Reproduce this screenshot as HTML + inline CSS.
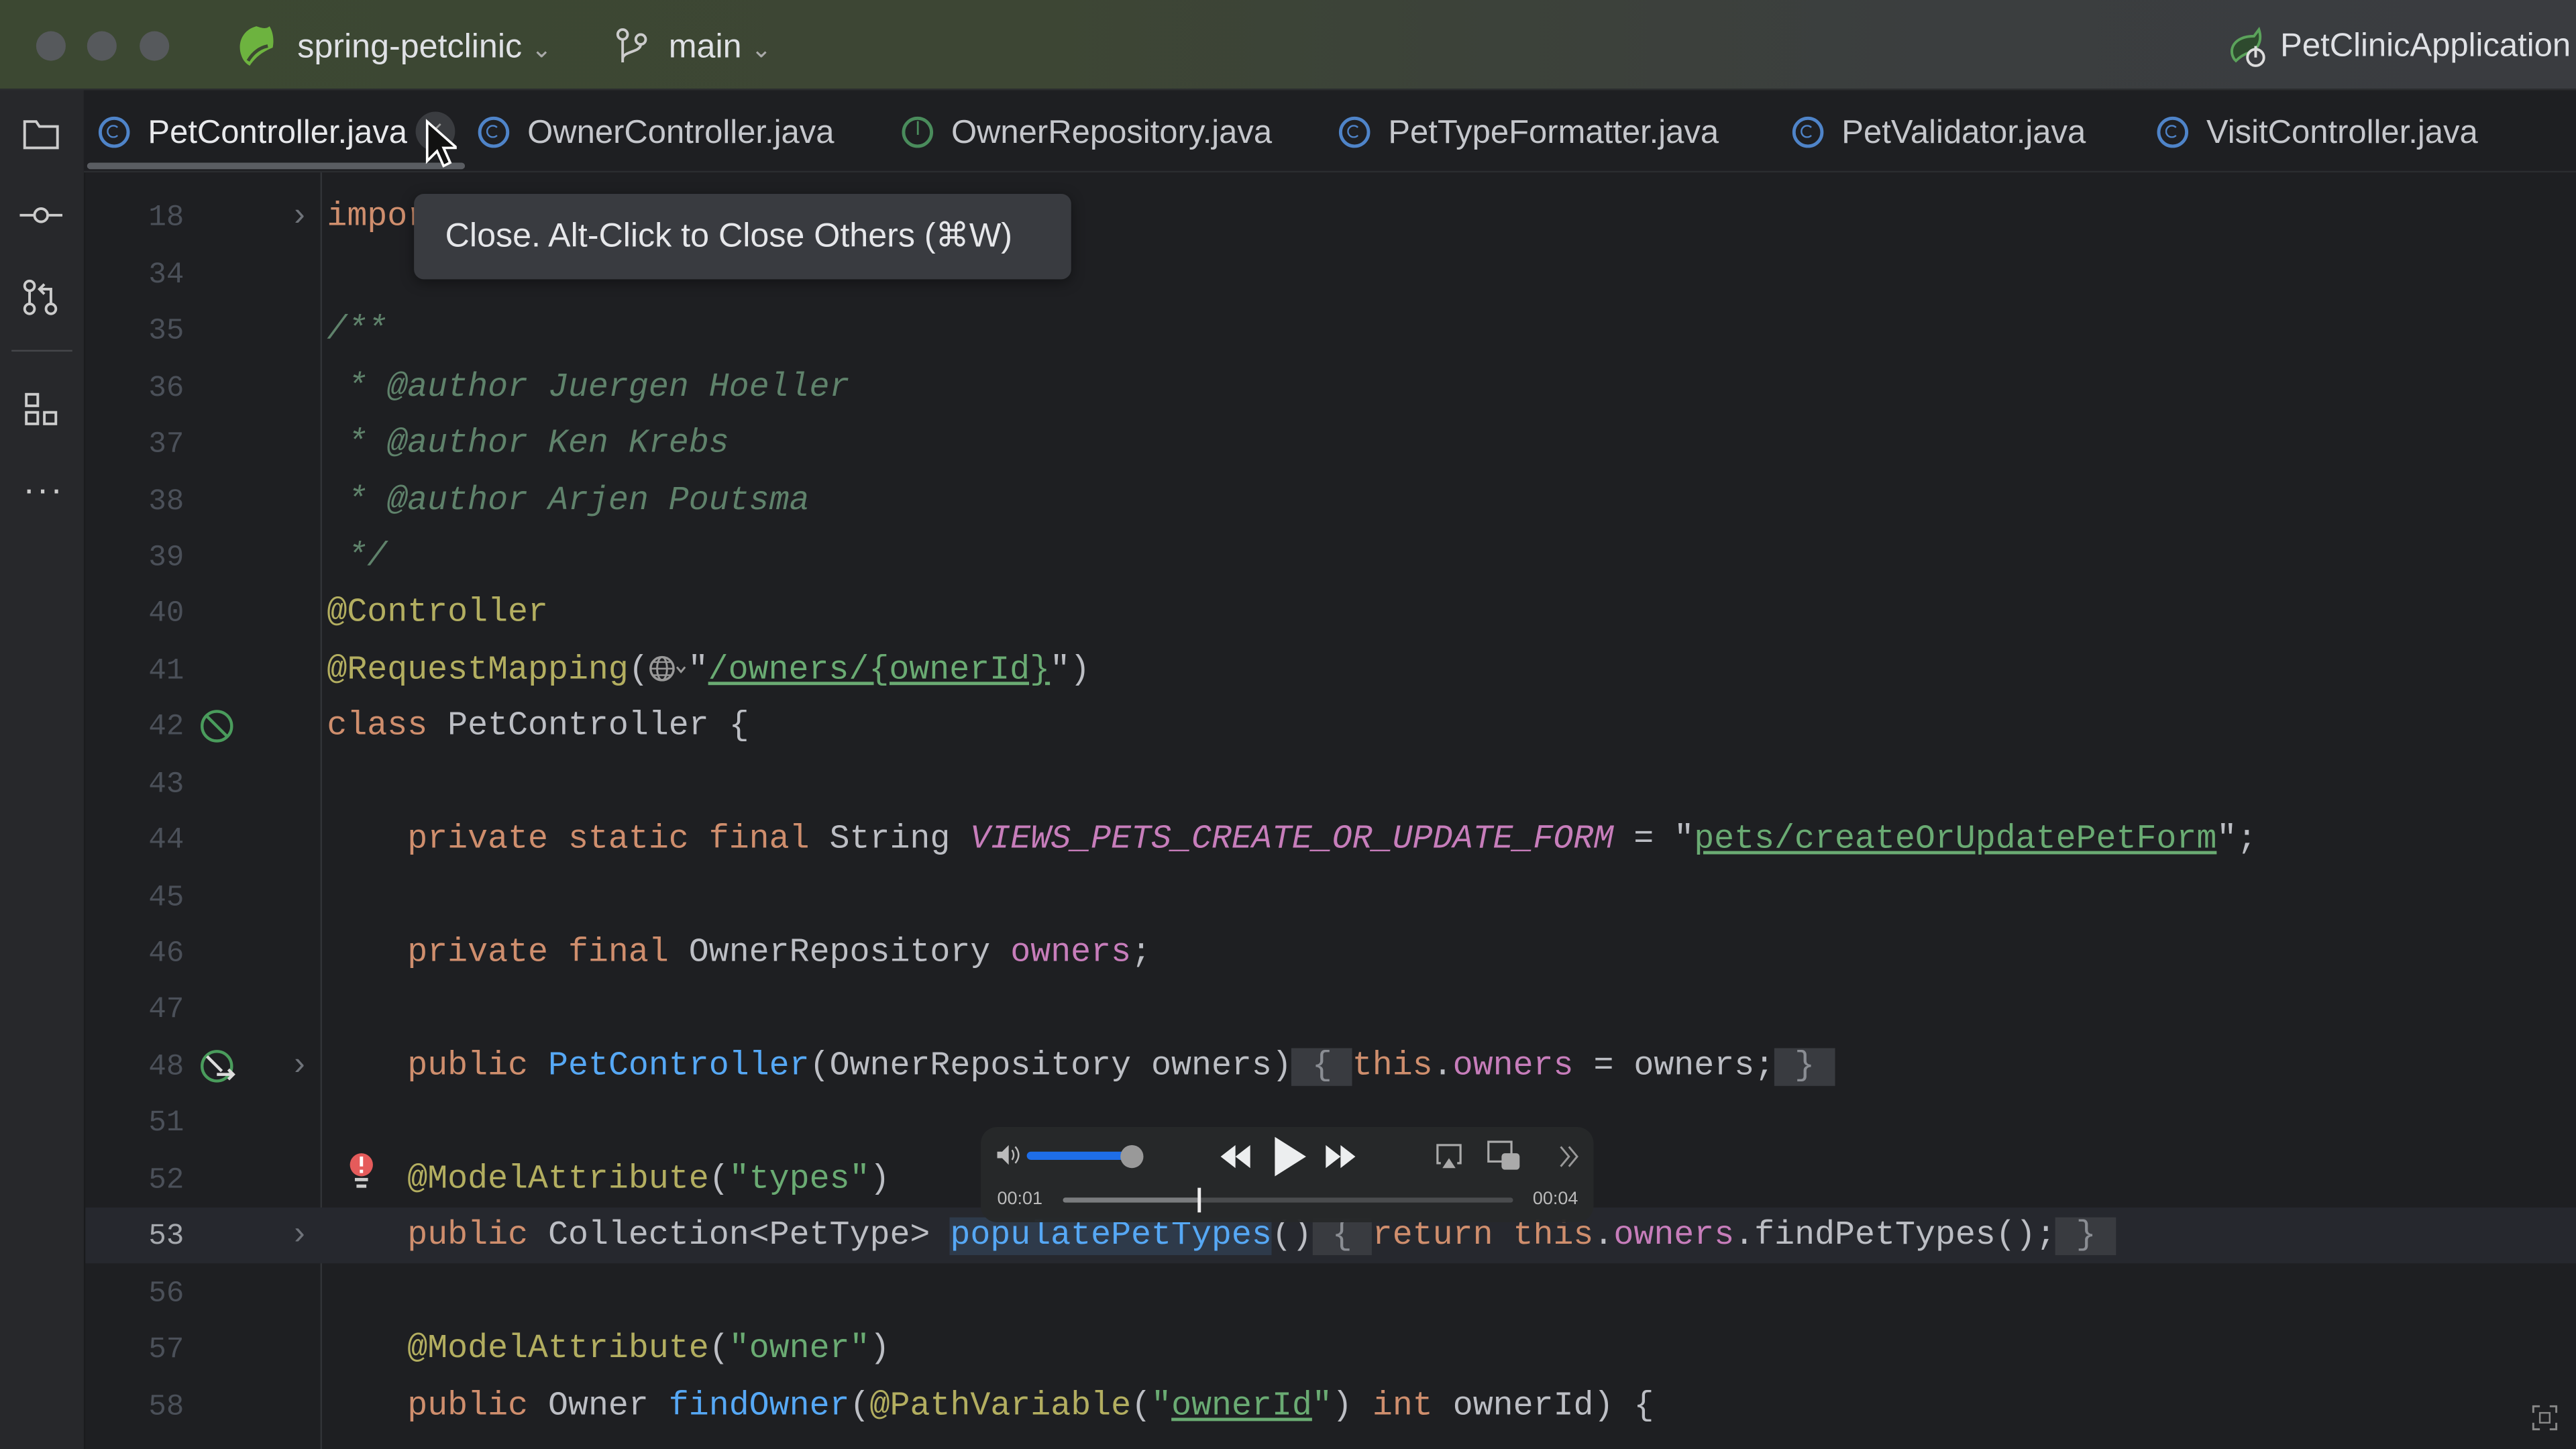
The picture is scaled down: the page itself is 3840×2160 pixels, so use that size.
<!DOCTYPE html>
<html><head><meta charset="utf-8">
<style>
html,body{margin:0;padding:0;background:#1e1f22;overflow:hidden}
#w{position:absolute;left:0;top:0;width:1568px;height:882px;transform:scale(2.44898);transform-origin:0 0;background:#1e1f22;font-family:"Liberation Sans",sans-serif;overflow:hidden}
.ab{position:absolute}
#title{left:0;top:0;width:1568px;height:54px;background:linear-gradient(90deg,#3c4832 0%,#3d4634 40%,#3b3e3f 75%,#3a3c40 100%);border-bottom:1px solid #2b2d2f}
.dot{width:18px;height:18px;border-radius:50%;background:#56595c;top:19px}
.tt{color:#dfe1e5;font-size:20.5px;top:17px;white-space:nowrap}
#strip{left:0;top:55px;width:51px;height:827px;background:#27282b;border-right:1px solid #1a1b1d}
#tabs{left:51px;top:55px;width:1517px;height:49px;background:#1e1f22;border-bottom:1px solid #2b2d30}
.tab{top:15px;font-size:20px;color:#c5c7cc;white-space:nowrap}
.ci{display:inline-block;width:19px;height:19px;border:2px solid #4f84c9;border-radius:50%;box-sizing:border-box;vertical-align:-3px;margin-right:11px;position:relative}
.ci::after{content:"";position:absolute;left:3px;top:3px;width:8px;height:8px;border:1.5px solid #4f84c9;border-right-color:transparent;border-radius:50%;box-sizing:border-box}
.ii{border-color:#4a8c5c}
.ii::after{display:none}
.ln{position:absolute;left:52px;width:60px;text-align:right;font-family:"Liberation Mono",monospace;font-size:18px;color:#4b5059;height:34.5px;line-height:34.5px}
.cl{position:absolute;left:199px;font-family:"Liberation Mono",monospace;font-size:20.4px;color:#bcbec4;white-space:pre;height:34.5px;line-height:34.5px}
.k{color:#cf8e6d}.a{color:#b3ae60}.s{color:#6aab73}.c{color:#5f826b;font-style:italic}
.p{color:#c77dbb}.pi{color:#c77dbb;font-style:italic}.m{color:#56a8f5}.u{text-decoration:underline;text-decoration-color:#6aab73}
.fb{background:#393b40;color:#8a8d93}
.fold{position:absolute;left:179px;color:#6f737a;font-size:20px;font-family:"Liberation Sans",sans-serif}
</style></head><body><div id="w">
<div id="title" class="ab">
 <div class="ab dot" style="left:22px"></div><div class="ab dot" style="left:53px"></div><div class="ab dot" style="left:85px"></div>
 <svg class="ab" style="left:143px;top:14px" width="26" height="28" viewBox="0 0 26 28"><path d="M13 2C5 4 1 12 4 20c1 3 3 5 5 6 4-6 9-9 14-11 1-5 0-10-2-13-2 2-5 1-8 0z" fill="#6db33f"/><path d="M8 23c3-5 7-8 12-9" stroke="#3c4832" stroke-width="2" fill="none"/></svg>
 <div class="ab tt" style="left:181px">spring-petclinic <span style="color:#aaa;font-size:15px">&#8964;</span></div>
 <svg class="ab" style="left:374px;top:16px" width="22" height="24" viewBox="0 0 22 24"><circle cx="5" cy="5" r="3" stroke="#ccc" fill="none" stroke-width="1.6"/><circle cx="16" cy="8" r="3" stroke="#ccc" fill="none" stroke-width="1.6"/><path d="M5 8v14M16 11c0 5-11 4-11 9" stroke="#ccc" fill="none" stroke-width="1.6"/></svg>
 <div class="ab tt" style="left:407px">main <span style="color:#aaa;font-size:15px">&#8964;</span></div>
 <svg class="ab" style="left:1354px;top:16px" width="28" height="26" viewBox="0 0 28 26"><path d="M6 20C2 14 6 6 18 6l3-4c2 6 0 12-6 14-3 1-6 3-8 5z" fill="#2e4a2e" stroke="#5ba35b" stroke-width="1.6"/><circle cx="19" cy="19" r="5" stroke="#ddd" fill="#3a3c40" stroke-width="1.6"/><path d="M19 12v7" stroke="#ddd" stroke-width="1.6"/></svg>
 <div class="ab tt" style="left:1388px;font-size:20px">PetClinicApplication</div>
</div>
<div id="strip" class="ab">
 <svg class="ab" style="left:14px;top:16px" width="22" height="20" viewBox="0 0 22 20"><path d="M1 3h7l2 3h11v13H1z" stroke="#ccc" fill="none" stroke-width="1.6"/></svg>
 <svg class="ab" style="left:12px;top:69px" width="26" height="14" viewBox="0 0 26 14"><circle cx="13" cy="7" r="4" stroke="#ccc" fill="none" stroke-width="1.6"/><path d="M0 7h9M17 7h9" stroke="#ccc" stroke-width="1.6"/></svg>
 <svg class="ab" style="left:13px;top:114px" width="24" height="24" viewBox="0 0 24 24"><circle cx="5" cy="5" r="3" stroke="#ccc" fill="none" stroke-width="1.6"/><circle cx="5" cy="19" r="3" stroke="#ccc" fill="none" stroke-width="1.6"/><circle cx="18" cy="19" r="3" stroke="#ccc" fill="none" stroke-width="1.6"/><path d="M5 8v8M18 16V7h-6M14 4l-3 3 3 3" stroke="#ccc" fill="none" stroke-width="1.6"/></svg>
 <div class="ab" style="left:7px;top:158px;width:37px;height:1px;background:#45474b"></div>
 <svg class="ab" style="left:14px;top:183px" width="22" height="22" viewBox="0 0 22 22"><rect x="2" y="2" width="7" height="7" stroke="#ccc" fill="none" stroke-width="1.6"/><rect x="2" y="13" width="7" height="7" stroke="#ccc" fill="none" stroke-width="1.6"/><rect x="13" y="13" width="7" height="7" stroke="#ccc" fill="none" stroke-width="1.6"/></svg>
 <div class="ab" style="left:14px;top:230px;color:#ccc;font-size:22px;letter-spacing:1px">&middot;&middot;&middot;</div>
</div>
<div id="tabs" class="ab">
 <div class="ab tab" style="left:9px;color:#e8e9ec"><span class="ci"></span>PetController.java</div>
 <div class="ab" style="left:202px;top:13px;width:24px;height:24px;border-radius:50%;background:#3a3c40;color:#999;font-size:16px;text-align:center;line-height:24px">&#215;</div>
 <div class="ab" style="left:2px;top:44px;width:230px;height:4px;background:#5a5d62;border-radius:2px"></div>
 <div class="ab tab" style="left:240px"><span class="ci"></span>OwnerController.java</div>
 <div class="ab tab" style="left:498px"><span class="ci ii"><span style="position:absolute;left:6px;top:-2px;font-size:12px;color:#4a8c5c">I</span></span>OwnerRepository.java</div>
 <div class="ab tab" style="left:764px"><span class="ci"></span>PetTypeFormatter.java</div>
 <div class="ab tab" style="left:1040px"><span class="ci"></span>PetValidator.java</div>
 <div class="ab tab" style="left:1262px"><span class="ci"></span>VisitController.java</div>
</div>
<svg class="ab" style="left:258px;top:72px" width="20" height="32" viewBox="0 0 20 32"><path d="M2 2v24l6-6 4 9 4-2-4-9h8z" fill="#111" stroke="#fff" stroke-width="1.5"/></svg>
<div class="ab" style="left:195px;top:105px;width:1px;height:777px;background:#313337"></div>
<div class="ab" style="left:52px;top:735px;width:1516px;height:34px;background:#26282e"></div>

<div class="ln" style="top:116px">18</div><div class="fold" style="top:120px">&#8250;</div><div class="cl k" style="top:116px">impor</div>
<div class="ln" style="top:151px">34</div>
<div class="ln" style="top:185px">35</div><div class="cl c" style="top:185px">/**</div>
<div class="ln" style="top:220px">36</div><div class="cl c" style="top:220px"> * @author Juergen Hoeller</div>
<div class="ln" style="top:254px">37</div><div class="cl c" style="top:254px"> * @author Ken Krebs</div>
<div class="ln" style="top:289px">38</div><div class="cl c" style="top:289px"> * @author Arjen Poutsma</div>
<div class="ln" style="top:323px">39</div><div class="cl c" style="top:323px"> */</div>
<div class="ln" style="top:357px">40</div><div class="cl a" style="top:357px">@Controller</div>
<div class="ln" style="top:392px">41</div><div class="cl" style="top:392px"><span class="a">@RequestMapping</span>(<svg width="24" height="18" viewBox="0 0 24 18" style="vertical-align:-3px"><circle cx="8" cy="9" r="7" stroke="#999" fill="none" stroke-width="1.4"/><ellipse cx="8" cy="9" rx="3" ry="7" stroke="#999" fill="none" stroke-width="1.2"/><path d="M1 9h14M2 5h12M2 13h12" stroke="#999" stroke-width="1"/><path d="M17 8l2.5 3 2.5-3" stroke="#999" fill="none" stroke-width="1.2"/></svg>"<span class="s u">/owners/{ownerId}</span>")</div>
<div class="ln" style="top:426px">42</div><svg class="ab" style="left:121px;top:431px" width="24" height="24" viewBox="0 0 24 24"><circle cx="11" cy="11" r="9" stroke="#4a9c5c" fill="none" stroke-width="1.8"/><path d="M5 5l12 12" stroke="#4a9c5c" stroke-width="1.8"/></svg><div class="cl" style="top:426px"><span class="k">class</span> PetController {</div>
<div class="ln" style="top:461px">43</div>
<div class="ln" style="top:495px">44</div><div class="cl" style="top:495px">    <span class="k">private static final</span> String <span class="pi">VIEWS_PETS_CREATE_OR_UPDATE_FORM</span> = "<span class="s u">pets/createOrUpdatePetForm</span>";</div>
<div class="ln" style="top:530px">45</div>
<div class="ln" style="top:564px">46</div><div class="cl" style="top:564px">    <span class="k">private final</span> OwnerRepository <span class="p">owners</span>;</div>
<div class="ln" style="top:598px">47</div>
<div class="ln" style="top:633px">48</div><svg class="ab" style="left:121px;top:638px" width="24" height="24" viewBox="0 0 24 24"><circle cx="11" cy="11" r="9" stroke="#4a9c5c" fill="none" stroke-width="1.8"/><path d="M5 5l9 9M11 16h10M18 13l3 3-3 3" stroke="#ddd" stroke-width="1.8" fill="none"/></svg><div class="fold" style="top:637px">&#8250;</div><div class="cl" style="top:633px">    <span class="k">public</span> <span class="m">PetController</span>(OwnerRepository owners)<span class="fb"> { </span><span class="k">this</span>.<span class="p">owners</span> = owners;<span class="fb"> } </span></div>
<div class="ln" style="top:667px">51</div>
<div class="ln" style="top:702px">52</div><svg class="ab" style="left:212px;top:701px" width="16" height="26" viewBox="0 0 16 26"><circle cx="8" cy="8" r="7" fill="#e55b5b"/><rect x="7" y="3" width="2" height="6" fill="#fff"/><rect x="7" y="11" width="2" height="2" fill="#fff"/><rect x="4" y="16" width="8" height="2" fill="#ccc"/><rect x="5" y="20" width="6" height="2" fill="#ccc"/></svg><div class="cl" style="top:702px">    <span class="a">@ModelAttribute</span>(<span class="s">"types"</span>)</div>
<div class="ln" style="top:736px;color:#a5a8ad">53</div><div class="fold" style="top:740px">&#8250;</div><div class="cl" style="top:736px">    <span class="k">public</span> Collection&lt;PetType&gt; <span class="m" style="background:#2e3a4a">populatePetTypes</span>()<span class="fb"> { </span><span class="k">return this</span>.<span class="p">owners</span>.findPetTypes();<span class="fb"> } </span></div>
<div class="ln" style="top:771px">56</div>
<div class="ln" style="top:805px">57</div><div class="cl" style="top:805px">    <span class="a">@ModelAttribute</span>(<span class="s">"owner"</span>)</div>
<div class="ln" style="top:840px">58</div><div class="cl" style="top:840px">    <span class="k">public</span> Owner <span class="m">findOwner</span>(<span class="a">@PathVariable</span>(<span class="s">"<span class="u">ownerId</span>"</span>) <span class="k">int</span> ownerId) {</div>

<div class="ab" style="left:252px;top:118px;width:400px;height:52px;background:#393b40;border-radius:6px;box-shadow:0 2px 8px rgba(0,0,0,.4)"></div>
<div class="ab" style="left:271px;top:131px;color:#e6e7ea;font-size:20.5px;white-space:nowrap">Close. Alt-Click to Close Others (&#8984;W)</div>

<div class="ab" style="left:597px;top:686px;width:373px;height:58px;background:rgba(38,40,41,.97);border-radius:10px"></div>
<svg class="ab" style="left:606px;top:696px" width="16" height="14" viewBox="0 0 16 14"><path d="M1 5h3l4-4v12l-4-4H1z" fill="#bbb"/><path d="M10 4q2 3 0 6M12 2q4 5 0 10" stroke="#bbb" fill="none" stroke-width="1"/></svg>
<div class="ab" style="left:625px;top:701px;width:64px;height:5px;background:#1e6ee8;border-radius:3px"></div>
<div class="ab" style="left:682px;top:697px;width:14px;height:14px;background:#999;border-radius:50%"></div>
<svg class="ab" style="left:742px;top:696px" width="20" height="16" viewBox="0 0 20 16"><path d="M10 1L1 8l9 7zM19 1l-9 7 9 7z" fill="#eceeef"/></svg>
<svg class="ab" style="left:774px;top:691px" width="22" height="26" viewBox="0 0 22 26"><path d="M2 1l19 12L2 25z" fill="#eceeef"/></svg>
<svg class="ab" style="left:806px;top:696px" width="20" height="16" viewBox="0 0 20 16"><path d="M1 1l9 7-9 7zM10 1l9 7-9 7z" fill="#eceeef"/></svg>
<svg class="ab" style="left:873px;top:695px" width="18" height="18" viewBox="0 0 18 18"><path d="M4 13H2V2h14v11h-2" stroke="#aaa" fill="none" stroke-width="1.3"/><path d="M9 10l4 6H5z" fill="#aaa"/></svg>
<svg class="ab" style="left:905px;top:694px" width="22" height="20" viewBox="0 0 22 20"><rect x="1" y="1" width="14" height="12" stroke="#aaa" fill="none" stroke-width="1.3"/><rect x="9" y="8" width="11" height="10" rx="2" fill="#aaa"/></svg>
<svg class="ab" style="left:948px;top:696px" width="14" height="16" viewBox="0 0 14 16"><path d="M2 2l5 6-5 6M7 2l5 6-5 6" stroke="#999" fill="none" stroke-width="1.2"/></svg>
<div class="ab" style="left:607px;top:724px;color:#bbb;font-size:11px">00:01</div>
<div class="ab" style="left:647px;top:729px;width:274px;height:3px;background:#4a4c4e;border-radius:2px"></div>
<div class="ab" style="left:647px;top:729px;width:83px;height:3px;background:#7a7c7e;border-radius:2px"></div>
<div class="ab" style="left:729px;top:723px;width:2px;height:15px;background:#eee"></div>
<div class="ab" style="left:933px;top:724px;color:#bbb;font-size:11px">00:04</div>
<svg class="ab" style="left:1541px;top:855px" width="16" height="16" viewBox="0 0 16 16"><path d="M1 5V1h4M11 1h4v4M15 11v4h-4M5 15H1v-4" stroke="#888" fill="none" stroke-width="1.2"/><rect x="5" y="5" width="6" height="6" stroke="#888" fill="none" stroke-width="1"/></svg>
</div></body></html>
